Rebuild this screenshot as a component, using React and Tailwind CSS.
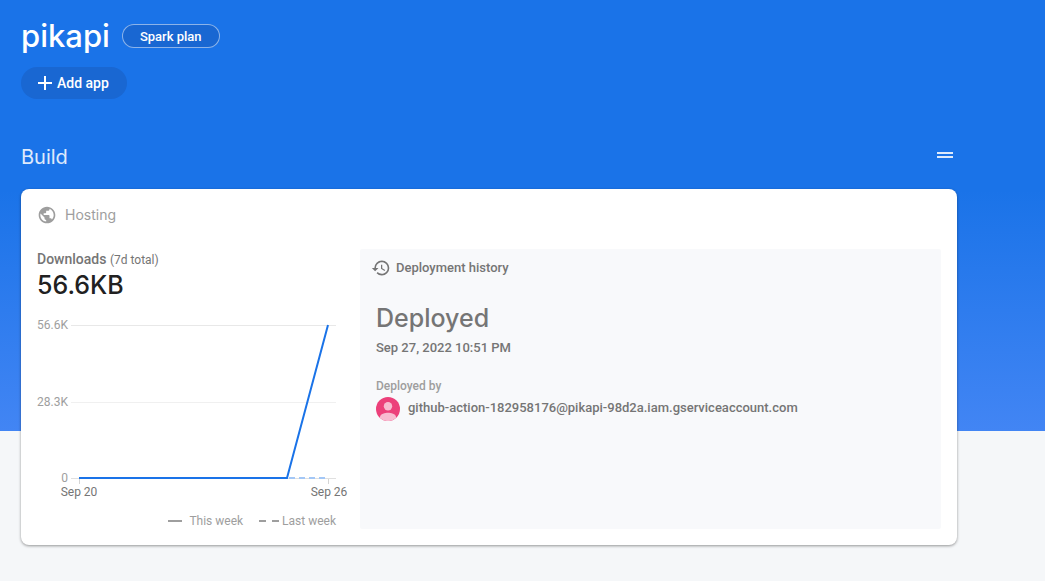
import { MdAdd, MdDragHandle, MdHistory, MdPublic } from "react-icons/md";

const gridLines = [
  { label: "56.6K", y: 24, color: "#e8e8e8" },
  { label: "28.3K", y: 101, color: "#f0f0f0" },
  { label: "0", y: 177, color: "#e0e0e0" },
];

function DownloadsChart() {
  return (
    <svg
      className="block h-[204px] w-full overflow-visible font-['Roboto',sans-serif] text-[12px]"
      role="img"
      aria-label="Downloads over the last 7 days"
    >
      {gridLines.map(({ label, y, color }) => (
        <g key={label}>
          <rect x="34" y={y} width="265" height="1" fill={color} />
          <text x="31" y={y + 4} textAnchor="end" fill="#9e9e9e">
            {label}
          </text>
        </g>
      ))}
      <path d="M42.5 178v5M291.5 178v5" stroke="#d5d5d5" />
      <text x="42" y="195" textAnchor="middle" fill="#757575">
        Sep 20
      </text>
      <text x="292" y="195" textAnchor="middle" fill="#757575">
        Sep 26
      </text>
      <path
        d="M42 177H291"
        stroke="#a3c7f6"
        strokeWidth="2"
        strokeDasharray="6 4"
      />
      <path
        d="M42 177H250L291 24"
        fill="none"
        stroke="#1a73e8"
        strokeWidth="2"
      />
    </svg>
  );
}

function Legend() {
  return (
    <div className="mt-2 flex justify-end pr-2 text-[12px] leading-4 text-[#9e9e9e]">
      <div className="flex items-center gap-[7px]">
        <svg width="14" height="2" aria-hidden="true">
          <path d="M0 1h14" stroke="#9e9e9e" strokeWidth="2" />
        </svg>
        This week
      </div>
      <div className="ml-4 flex items-center gap-[3px]">
        <svg width="20" height="2" aria-hidden="true">
          <path d="M0 1h7M13 1h7" stroke="#9e9e9e" strokeWidth="2" />
        </svg>
        Last week
      </div>
    </div>
  );
}

function Avatar() {
  return (
    <svg width="24" height="24" viewBox="0 0 24 24" aria-hidden="true">
      <circle cx="12" cy="12" r="12" fill="#ec407a" />
      <circle cx="12" cy="9.3" r="4.2" fill="#f8bbd0" />
      <path
        d="M4 21v-1.2c0-2.7 5.3-4.1 8-4.1s8 1.4 8 4.1V21a12 12 0 0 1-16 0z"
        fill="#f8bbd0"
      />
    </svg>
  );
}

function DeploymentHistory() {
  return (
    <section className="rounded-xs bg-[#f8f9fb] pt-[9px] text-[13px] font-medium text-[#757575]">
      <div className="flex items-center gap-[5px] px-[11px] leading-5">
        <MdHistory size={20} />
        <h3>Deployment history</h3>
      </div>
      <div className="mt-6 px-4">
        <p className="font-['Inter',sans-serif] text-[25px] leading-8 font-medium">
          Deployed
        </p>
        <p className="mt-1 leading-5">Sep 27, 2022 10:51 PM</p>
        <p className="mt-5 text-[12px] leading-4 text-[#9e9e9e]">Deployed by</p>
        <div className="mt-[3px] flex gap-2">
          <Avatar />
          <span className="leading-[22px]">
            github-action-182958176@pikapi-98d2a.iam.gserviceaccount.com
          </span>
        </div>
      </div>
    </section>
  );
}

export default function App() {
  return (
    <div className="min-h-screen bg-[#f5f7f9] bg-[linear-gradient(#1a73e8_190px,#4285f4)] bg-[length:100%_431px] bg-no-repeat pt-4 pr-[88px] pb-9 pl-[21px] font-['Roboto',sans-serif]">
      <header className="text-white">
        <div className="flex h-10 items-center gap-3">
          <h1 className="font-['Inter',sans-serif] text-[31px] leading-10 font-medium">
            pikapi
          </h1>
          <button className="h-6 rounded-full border border-white/50 bg-[#1967d2] px-[17px] text-[13px] leading-none font-medium">
            Spark plan
          </button>
        </div>
        <button className="mt-[11px] flex h-8 items-center gap-0.5 rounded-full bg-[#1967d2] pr-[18px] pl-[14px] text-[14px] font-medium">
          <MdAdd size={20} className="scale-[1.2]" />
          Add app
        </button>
      </header>

      <div className="mt-11 mb-[18px] flex h-7 items-start justify-between text-white/85">
        <h2 className="font-['Inter',sans-serif] text-[20px] leading-7">
          Build
        </h2>
        <button aria-label="Reorder">
          <MdDragHandle size={24} />
        </button>
      </div>

      <main className="rounded-lg bg-white p-4 shadow-[0_1px_3px_rgba(0,0,0,0.4)]">
        <div className="flex h-5 items-center gap-2 text-[#9e9e9e]">
          <MdPublic size={20} />
          <h3 className="font-['Inter',sans-serif] text-[14px] leading-5">
            Hosting
          </h3>
        </div>
        <div className="mt-6 grid grid-cols-[307px_1fr] gap-4">
          <section>
            <h4 className="text-[14px] leading-5 font-medium text-[#757575]">
              Downloads{" "}
              <span className="text-[12px] leading-4 font-normal">
                (7d total)
              </span>
            </h4>
            <p className="font-['Inter',sans-serif] text-[25px] leading-8 font-medium text-[#212121]">
              56.6KB
            </p>
            <DownloadsChart />
            <Legend />
          </section>
          <DeploymentHistory />
        </div>
      </main>
    </div>
  );
}
